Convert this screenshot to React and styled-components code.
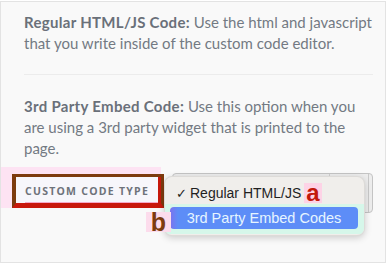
import React from "react";
import styled, { createGlobalStyle } from "styled-components";

const GlobalStyle = createGlobalStyle`
  html, body {
    margin: 0;
    padding: 0;
    background: #ffffff;
  }
  body {
    font-family: "Lato", "Open Sans", sans-serif;
  }
`;

const Panel = styled.div`
  width: 386px;
  height: 262px;
  box-sizing: border-box;
  margin-top: 1px;
  border: 1px solid #e3e3e3;
  background: #f9f9f9;
  padding-top: 10px;
  overflow: hidden;
`;

const Paragraph = styled.p`
  margin: 0 12px 0 23px;
  font-size: 15px;
  line-height: 21px;
  color: #737a83;
  font-family: "Lato", sans-serif;

  strong {
    font-weight: 700;
    letter-spacing: 0.3px;
    color: #6a7079;
  }
`;

const Divider = styled.hr`
  margin: 20px 12px 21px 23px;
  border: none;
  border-top: 1px solid #ececec;
`;

const FieldRow = styled.div`
  position: relative;
  display: flex;
  align-items: flex-start;
  margin-top: 8px;
`;

const LabelCell = styled.div`
  width: 160px;
  height: 41px;
  box-sizing: border-box;
  padding: 7px 0 0 11px;
  background: #fde3f3;
`;

const LabelBox = styled.div`
  width: 152px;
  height: 34px;
  box-sizing: border-box;
  border-top: 3px solid #7d3b0e;
  border-left: 4px solid #7d3b0e;
  border-right: 3px solid #7d3b0e;
  border-bottom: 5px solid #c8180c;
  background: #f7f6fb;
  display: flex;
  align-items: center;
  padding-left: 9px;
`;

const LabelInner = styled.div`
  flex: 1;
  height: 100%;
  display: flex;
  align-items: center;
  border-right: 3px solid #c8180c;
  box-shadow: inset 0 -1px 0 #f5a9c9;
`;

const LabelText = styled.span`
  font-family: "Open Sans", sans-serif;
  font-size: 10.5px;
  font-weight: 700;
  letter-spacing: 1.25px;
  white-space: nowrap;
  color: #6e727a;
  margin-top: 1px;
`;

const SelectCell = styled.div`
  position: relative;
  margin-left: 11px;
  margin-top: 6px;
`;

const SelectBox = styled.div`
  width: 201px;
  height: 40px;
  box-sizing: border-box;
  border: 1px solid #c4c4c4;
  border-radius: 4px;
  background: #ededed;
  display: flex;
  justify-content: flex-end;
`;

const SelectArrow = styled.div`
  width: 38px;
  border-left: 1px solid #d0d0d0;
  border-right: 1px solid #c9c9c9;
  margin-right: 3px;
`;

const Menu = styled.div`
  position: absolute;
  left: -8px;
  top: 3px;
  width: 201px;
  height: 60px;
  box-sizing: border-box;
  border-radius: 8px;
  background: #f0eeeb;
  border: 1px solid rgba(0, 0, 0, 0.08);
  box-shadow: 0 2px 7px rgba(0, 0, 0, 0.18);
  padding-top: 6px;
  overflow: hidden;
`;

const MenuItem = styled.div`
  display: flex;
  align-items: center;
  height: 20px;
  padding-left: 11px;
  font-family: "Liberation Sans", "DejaVu Sans", sans-serif;
  font-size: 14px;
  color: #1f1f1f;
  white-space: nowrap;
`;

const Check = styled.span`
  width: 14px;
  font-size: 13px;
`;

const Marker = styled.span`
  margin-left: 3px;
  padding: 0 2px;
  background: #fdd3e6;
  color: ${(p) => p.$color};
  font-family: "Liberation Sans", sans-serif;
  font-weight: 700;
  font-size: 24px;
  line-height: 20px;
`;

const HighlightBand = styled.div`
  margin-top: 1px;
  background: #d6f7ea;
  padding: 3px 6px 5px 5px;
`;

const ActiveItem = styled.div`
  height: 22px;
  border-radius: 4px;
  background: linear-gradient(90deg, #7c72ee 0px, #5d8df7 8px);
  color: #e6f5ff;
  font-family: "Liberation Sans", "DejaVu Sans", sans-serif;
  font-size: 14.5px;
  white-space: nowrap;
  display: flex;
  align-items: center;
  justify-content: center;
`;

const FloatingLetter = styled.span`
  position: absolute;
  left: 145px;
  top: 45px;
  width: 25px;
  height: 20px;
  background: #fcdcec;
  color: #7d3b0e;
  font-family: "Liberation Sans", sans-serif;
  font-weight: 700;
  font-size: 25px;
  line-height: 20px;
  text-align: center;
`;

export default function App() {
  return (
    <>
      <GlobalStyle />
      <Panel>
        <Paragraph>
          <strong>Regular HTML/JS Code:</strong> Use the html and javascript
          that you write inside of the custom code editor.
        </Paragraph>
        <Divider />
        <Paragraph>
          <strong>3rd Party Embed Code:</strong> Use this option when you
          are using a 3rd party widget that is printed to the page.
        </Paragraph>
        <FieldRow>
          <LabelCell>
            <LabelBox>
              <LabelInner>
                <LabelText>CUSTOM CODE TYPE</LabelText>
              </LabelInner>
            </LabelBox>
          </LabelCell>
          <SelectCell>
            <SelectBox>
              <SelectArrow />
            </SelectBox>
            <Menu>
              <MenuItem>
                <Check>✓</Check>
                Regular HTML/JS
                <Marker $color="#c3190c">a</Marker>
              </MenuItem>
              <HighlightBand>
                <ActiveItem>3rd Party Embed Codes</ActiveItem>
              </HighlightBand>
            </Menu>
          </SelectCell>
          <FloatingLetter>b</FloatingLetter>
        </FieldRow>
      </Panel>
    </>
  );
}
